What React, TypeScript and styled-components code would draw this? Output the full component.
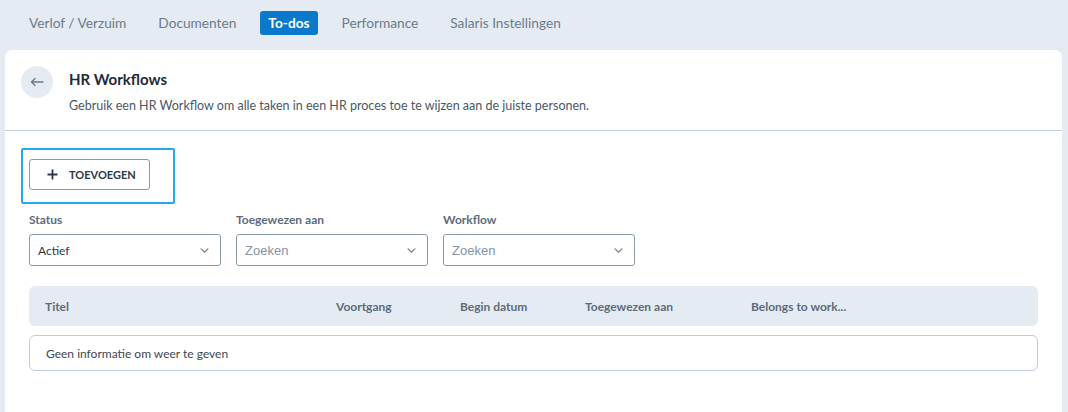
import React from 'react';
import styled, { createGlobalStyle } from 'styled-components';

const colors = {
	page: '#e4ebf3',
	text: '#2b3846',
	muted: '#5d6b7a',
	tab: '#6d7b8a',
	primary: '#0a79cc',
	focus: '#22aaf0',
	border: '#8b9aab',
	line: '#c2ccd6',
};

const GlobalStyle = createGlobalStyle`
	body {
		margin: 0;
		background: ${colors.page};
		font-family: Lato, 'Noto Sans', sans-serif;
		color: ${colors.text};
	}
`;

const tabs = ['Verlof / Verzuim', 'Documenten', 'To-dos', 'Performance', 'Salaris Instellingen'];

const columns = [
	{ label: 'Titel', width: 291 },
	{ label: 'Voortgang', width: 124 },
	{ label: 'Begin datum', width: 125 },
	{ label: 'Toegewezen aan', width: 166 },
	{ label: 'Belongs to work...', width: 200 },
];

const filters = [
	{ label: 'Status', value: 'Actief', placeholder: false },
	{ label: 'Toegewezen aan', value: 'Zoeken', placeholder: true },
	{ label: 'Workflow', value: 'Zoeken', placeholder: true },
];

function Chevron() {
	return (
		<svg width="9" height="5" viewBox="0 0 9 5" fill="none">
			<path d="M1 0.8l3.5 3.4 3.5-3.4" stroke="#7d8c9c" strokeWidth="1.2" strokeLinecap="round" strokeLinejoin="round" />
		</svg>
	);
}

export default function App() {
	return (
		<Page>
			<GlobalStyle />
			<TabBar>
				{tabs.map(tab => (
					<Tab key={tab} $active={tab === 'To-dos'}>
						{tab}
					</Tab>
				))}
			</TabBar>
			<Card>
				<Header>
					<BackButton aria-label="Terug">
						<svg width="14" height="10" viewBox="0 0 14 10" fill="none">
							<path d="M13 5H1.5M5 1.5L1.5 5 5 8.5" stroke="#6d7b8a" strokeWidth="1.4" strokeLinecap="round" strokeLinejoin="round" />
						</svg>
					</BackButton>
					<div>
						<Title>HR Workflows</Title>
						<Subtitle>Gebruik een HR Workflow om alle taken in een HR proces toe te wijzen aan de juiste personen.</Subtitle>
					</div>
				</Header>
				<Body>
					<FocusRing>
						<AddButton>
							<svg width="11" height="11" viewBox="0 0 11 11">
								<path d="M5.5 0.5v10M0.5 5.5h10" stroke="#2b3846" strokeWidth="1.8" />
							</svg>
							Toevoegen
						</AddButton>
					</FocusRing>
					<Filters>
						{filters.map(f => (
							<Field key={f.label}>
								<FieldLabel>{f.label}</FieldLabel>
								<Select $placeholder={f.placeholder}>
									<span>{f.value}</span>
									<Chevron />
								</Select>
							</Field>
						))}
					</Filters>
					<TableHead>
						{columns.map(c => (
							<HeadCell key={c.label} style={{ width: c.width }}>
								{c.label}
							</HeadCell>
						))}
					</TableHead>
					<EmptyRow>Geen informatie om weer te geven</EmptyRow>
				</Body>
			</Card>
		</Page>
	);
}

const Page = styled.div`
	min-height: 412px;
	padding: 0 6px 0 5px;
	box-sizing: border-box;
`;

const TabBar = styled.nav`
	display: flex;
	align-items: center;
	gap: 16px;
	height: 44px;
	padding: 1px 0 0 16px;
	box-sizing: border-box;
	margin-bottom: 6px;
`;

const Tab = styled.span<{ $active: boolean }>`
	font-size: 13.7px;
	line-height: 24px;
	padding: 0 8px;
	border-radius: 3px;
	color: ${p => (p.$active ? '#fff' : colors.tab)};
	background: ${p => (p.$active ? colors.primary : 'transparent')};
	font-weight: ${p => (p.$active ? 700 : 400)};
`;

const Card = styled.section`
	background: #fff;
	border-radius: 7px 7px 0 0;
	min-height: 362px;
`;

const Header = styled.header`
	display: flex;
	align-items: flex-start;
	gap: 16px;
	padding: 16px;
	border-bottom: 1px solid ${colors.line};
	height: 81px;
	box-sizing: border-box;
`;

const BackButton = styled.button`
	flex-shrink: 0;
	width: 32px;
	height: 32px;
	border-radius: 50%;
	border: none;
	background: ${colors.page};
	display: flex;
	align-items: center;
	justify-content: center;
	padding: 0;
`;

const Title = styled.h1`
	margin: 4px 0 0;
	font-size: 15px;
	font-weight: 700;
	line-height: 18px;
	color: #1e2b39;
`;

const Subtitle = styled.p`
	margin: 10px 0 0;
	font-size: 12.5px;
	line-height: 16px;
	color: #4a5766;
`;

const Body = styled.div`
	padding: 17px 24px 0 16px;
`;

const FocusRing = styled.div`
	display: inline-flex;
	border: 2px solid ${colors.focus};
	border-radius: 2px;
	padding: 9px 23px 12px 6px;
`;

const AddButton = styled.button`
	display: inline-flex;
	align-items: center;
	gap: 11px;
	height: 31px;
	padding: 0 13px 0 17px;
	border: 1px solid ${colors.border};
	border-radius: 3px;
	background: #fff;
	font-family: inherit;
	font-size: 11px;
	font-weight: 700;
	text-transform: uppercase;
	color: #2b3846;
`;

const Filters = styled.div`
	display: flex;
	gap: 15px;
	margin: 8px 0 20px 8px;
`;

const Field = styled.div`
	display: flex;
	flex-direction: column;
	gap: 6px;
	width: 192px;
`;

const FieldLabel = styled.label`
	font-size: 12px;
	font-weight: 700;
	line-height: 16px;
	color: ${colors.muted};
`;

const Select = styled.div<{ $placeholder: boolean }>`
	display: flex;
	align-items: center;
	justify-content: space-between;
	height: 32px;
	box-sizing: border-box;
	padding: 0 11px 0 8px;
	border: 1px solid ${colors.border};
	border-radius: 3px;
	font-size: ${p => (p.$placeholder ? '13px' : '12px')};
	font-family: ${p => (p.$placeholder ? "'Liberation Sans', Arial, sans-serif" : 'inherit')};
	color: ${p => (p.$placeholder ? '#8593a3' : colors.text)};
`;

const TableHead = styled.div`
	display: flex;
	align-items: center;
	height: 40px;
	margin-left: 8px;
	padding-left: 16px;
	background: ${colors.page};
	border-radius: 6px;
`;

const HeadCell = styled.div`
	font-size: 12px;
	font-weight: 700;
	color: ${colors.muted};
	white-space: nowrap;
`;

const EmptyRow = styled.div`
	margin: 9px 0 0 8px;
	height: 36px;
	box-sizing: border-box;
	display: flex;
	align-items: center;
	padding-left: 16px;
	border: 1px solid ${colors.line};
	border-radius: 6px;
	font-size: 12px;
	color: #3a4756;
`;
